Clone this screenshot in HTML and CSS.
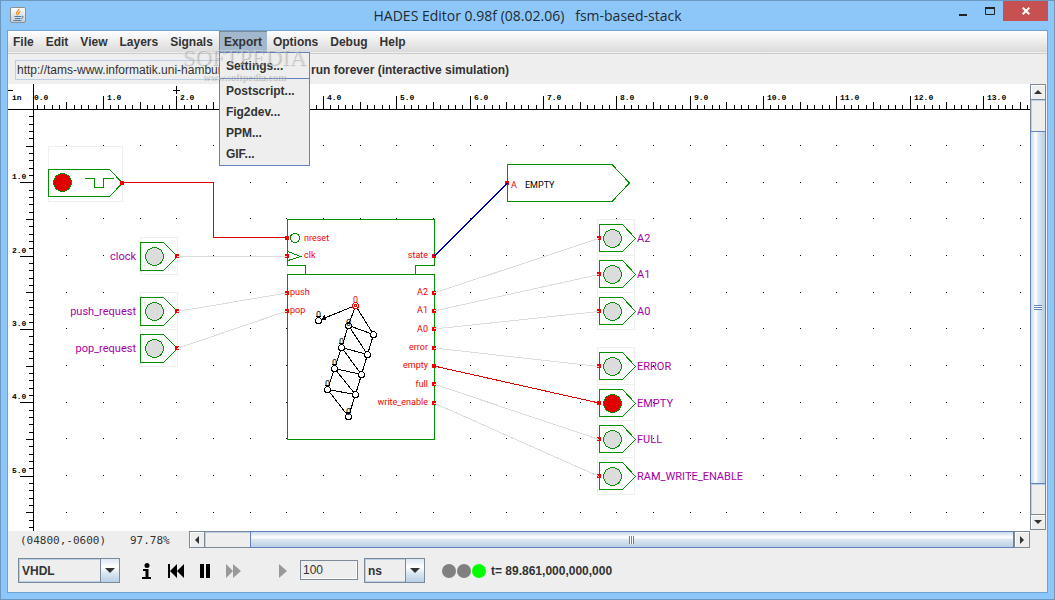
FILE: index.html
```html
<!DOCTYPE html>
<html lang="en">
<head>
<meta charset="utf-8">
<title>HADES Editor 0.98f (08.02.06) fsm-based-stack</title>
<link rel="stylesheet" href="styles.css">
</head>
<body>
<div class="window">
  <header class="titlebar">
    <svg class="app-icon" width="16" height="16" viewBox="0 0 16 16" aria-hidden="true">
      <defs><linearGradient id="tile" x1="0" y1="0" x2="0" y2="1"><stop offset="0" stop-color="#fff"/><stop offset="1" stop-color="#c4ccd2"/></linearGradient></defs>
      <rect x=".5" y=".5" width="15" height="15" rx="1.5" fill="url(#tile)" stroke="#8c8f90"/>
      <path d="M9 2C9 4 6 4.5 6.500 6.500C6.700 7.500 7.500 7.500 7.500 8.500M10.500 4.500C8.500 5.500 8 6 9 7.500" fill="none" stroke="#f08a1c" stroke-width="1.200"/>
      <path d="M4.500 9.500H11M5 11.500H10.500M3.500 13.500H11.500M11.500 9.500C14 8.500 13.500 11 11.300 11.500" fill="none" stroke="#4d7d9c"/>
    </svg>
    <h1 class="title">HADES Editor 0.98f (08.02.06) &nbsp; fsm-based-stack</h1>
    <div class="window-buttons">
      <button class="win-btn" aria-label="Minimize"><svg width="10" height="10"><path d="M1 8H9" stroke="#222" stroke-width="2"/></svg></button>
      <button class="win-btn" aria-label="Maximize"><svg width="10" height="8"><path d="M.5 1V7.500H9.500V1M0 1H10" fill="none" stroke="#222"/><path d="M0 1H10" stroke="#222" stroke-width="2"/></svg></button>
      <button class="win-btn close" aria-label="Close"><svg width="8" height="8"><path d="M.7 .7L7.300 7.300M7.300 .7L.7 7.300" stroke="#fff" stroke-width="2"/></svg></button>
    </div>
  </header>

  <div class="client">
    <nav class="menubar">
      <button class="menu">File</button>
      <button class="menu">Edit</button>
      <button class="menu">View</button>
      <button class="menu">Layers</button>
      <button class="menu">Signals</button>
      <div class="menu-holder">
        <button class="menu open" aria-expanded="true">Export</button>
        <div class="popup" role="menu">
          <button class="item first" role="menuitem">Settings...</button>
          <button class="item" role="menuitem">Postscript...</button>
          <button class="item" role="menuitem">Fig2dev...</button>
          <button class="item" role="menuitem">PPM...</button>
          <button class="item" role="menuitem">GIF...</button>
        </div>
        <div class="watermark"><span class="wm-name">SOFTPEDIA</span><span class="wm-site">www.softpedia.com</span></div>
      </div>
      <button class="menu">Options</button>
      <button class="menu">Debug</button>
      <button class="menu">Help</button>
    </nav>

    <div class="location">
      <input class="url" type="text" aria-label="Design location" value="http://tams-www.informatik.uni-hamburg.de">
      <span class="mode">run forever (interactive simulation)</span>
    </div>

    <div class="workspace">
      <svg class="canvas" role="img" aria-label="Schematic">
        <defs>
          <g id="in-pin">
            <rect class="bounds" x="-14" y="-19" width="37" height="37"/>
            <path class="shape" d="M-14 -14H9L23 0L9 14H-14Z"/>
            <circle class="lamp" r="9"/>
          </g>
          <g id="out-pin">
            <rect class="bounds" x="-15" y="-19" width="37" height="37"/>
            <path class="shape" d="M-13 -14H10L23 0L10 13H-13Z"/>
            <circle class="lamp" r="9"/>
          </g>
          <rect id="port" x="-2" y="-2" width="4" height="4" fill="#f00000"/>
          <circle id="state" class="node" r="3"/>
          <marker id="arrow" viewBox="0 0 6 6" refX="9" refY="3" markerWidth="5" markerHeight="5" orient="auto"><path d="M0 0L6 3L0 6Z"/></marker>
        </defs>
        <g transform="translate(-8 -84)">
          <g id="grid"></g>
          <g id="rulers" class="ruler">
            <path class="tick" d="M8 109.500H3000M33.500 84V3000M8 90.500H13M173 90.500H180M176.500 86V94"/>
            <text x="12" y="100">in</text>
          </g>

          <rect class="bounds" x="48.500" y="146.500" width="74" height="55"/>
          <path class="shape" d="M48.500 169.500H109.500L122.500 183L109.500 196.500H48.500Z"/>
          <path class="outline" d="M85 178.500H94.500V187.500H103.500V178.500H114"/>
          <circle class="lamp on" cx="62.500" cy="182.500" r="9"/>

          <use href="#in-pin" x="154.500" y="256.500"/>
          <use href="#in-pin" x="154.500" y="311.500"/>
          <use href="#in-pin" x="154.500" y="348.500"/>
          <use href="#out-pin" x="612.500" y="238.500"/>
          <use href="#out-pin" x="612.500" y="274.500"/>
          <use href="#out-pin" x="612.500" y="311.500"/>
          <use href="#out-pin" x="612.500" y="366.500"/>
          <use href="#out-pin" x="612.500" y="403.500"/>
          <use href="#out-pin" x="612.500" y="439.500"/>
          <use href="#out-pin" x="612.500" y="476.500"/>
          <circle class="lamp on" cx="612.500" cy="403.500" r="9"/>

          <path class="shape" d="M507.500 164.500H612L629.500 183L612 201.500H507.500Z"/>

          <rect class="bounds" x="287.500" y="219.500" width="147" height="220"/>
          <path class="shape" d="M305.500 274.500V265.500H287.500V219.500H434.500V265.500H415.500V274.500"/>
          <rect class="shape" x="287.500" y="274.500" width="147" height="165"/>
          <circle class="outline" cx="295" cy="238" r="4.700"/>
          <path class="outline" d="M288 251.500L300.500 256.500L288 260.500"/>

          <g>
            <use href="#port" x="122" y="183"/><use href="#port" x="177" y="256"/><use href="#port" x="177" y="311"/><use href="#port" x="177" y="348"/>
            <use href="#port" x="287" y="238"/><use href="#port" x="287" y="256"/><use href="#port" x="287" y="293"/><use href="#port" x="287" y="311"/>
            <use href="#port" x="434" y="256"/><use href="#port" x="434" y="293"/><use href="#port" x="434" y="311"/><use href="#port" x="434" y="329"/>
            <use href="#port" x="434" y="348"/><use href="#port" x="434" y="366"/><use href="#port" x="434" y="384"/><use href="#port" x="434" y="403"/>
            <use href="#port" x="507" y="183"/><use href="#port" x="599" y="238"/><use href="#port" x="599" y="274"/><use href="#port" x="599" y="311"/>
            <use href="#port" x="599" y="366"/><use href="#port" x="599" y="403"/><use href="#port" x="599" y="439"/><use href="#port" x="599" y="476"/>
          </g>

          <g class="wires">
            <path class="low" d="M177 256.500H287M177 311.500L287 293M177 348.500L287 311M434 293L599 238.500M434 311L599 274.500M434 329L599 311.500M434 348L599 366.500M434 384L599 439.500M434 403L599 476.500"/>
            <path class="high" d="M122 182.500H213.500V237.500H287M434 366L599 403"/>
            <path class="bus" d="M434.500 256L507.500 183"/>
          </g>

          <g class="fsm">
            <g class="edges">
              <path marker-end="url(#arrow)" d="M355.500 305.500L318.500 320.500"/>
              <path d="M355.500 305.500L348.500 325.500L341.500 347.500L334.500 368.500L327.500 389.500L348.500 416.500L355.500 394.500L361.500 374.500L367.500 354.500L373.500 334.500Z"/>
              <path d="M348.500 325.500L373.500 334.500M348.500 325.500L367.500 354.500L341.500 347.500L361.500 374.500L334.500 368.500L355.500 394.500L327.500 389.500"/>
            </g>
            <use href="#state" x="318.500" y="320.500"/>
            <use href="#state" x="348.500" y="325.500"/><use href="#state" x="341.500" y="347.500"/><use href="#state" x="334.500" y="368.500"/><use href="#state" x="327.500" y="389.500"/>
            <use href="#state" x="373.500" y="334.500"/><use href="#state" x="367.500" y="354.500"/><use href="#state" x="361.500" y="374.500"/><use href="#state" x="355.500" y="394.500"/>
            <use href="#state" x="348.500" y="416.500"/>
            <circle class="start" cx="355.500" cy="305.500" r="3"/><circle class="start" cx="355.500" cy="305.500" r="1"/>
            <g class="state-name">
              <text class="red" x="355.500" y="303">0</text><text x="318.500" y="318">0</text><text x="348.500" y="326">0</text><text x="341.500" y="345">0</text>
              <text x="334.500" y="366">0</text><text x="327.500" y="387">0</text><text x="348.500" y="415">0</text>
            </g>
            <path class="edges" d="M316 316.500H321M346 323.500H351M339 343.500H344M332 364.500H337M325 385.500H330M346 412.500H351"/>
          </g>

          <g class="pin-name">
            <text x="304" y="241">nreset</text><text x="304" y="258">clk</text><text x="290" y="295">push</text><text x="290" y="313">pop</text>
            <text x="511" y="188">A</text><text class="black" x="525" y="188">EMPTY</text>
            <g class="end">
              <text x="428" y="258">state</text><text x="428" y="295">A2</text><text x="428" y="313">A1</text><text x="428" y="332">A0</text>
              <text x="428" y="350">error</text><text x="428" y="368">empty</text><text x="428" y="387">full</text><text x="428" y="405">write_enable</text>
            </g>
          </g>
          <g class="net-name">
            <g class="end"><text x="136" y="260">clock</text><text x="136" y="315">push_request</text><text x="136" y="352">pop_request</text></g>
            <text x="637" y="242">A2</text><text x="637" y="278">A1</text><text x="637" y="315">A0</text><text x="637" y="370">ERROR</text>
            <text x="637" y="407">EMPTY</text><text x="637" y="443">FULL</text><text x="637" y="480">RAM_WRITE_ENABLE</text>
          </g>
        </g>
      </svg>
      <div class="scroll vertical">
        <button class="arrow" aria-label="Scroll up"><svg width="8" height="4"><path d="M0 4L4 0L8 4Z"/></svg></button>
        <div class="track before"></div>
        <div class="thumb"><span class="grip"></span></div>
        <div class="track after"></div>
        <button class="arrow" aria-label="Scroll down"><svg width="8" height="4"><path d="M0 0L4 4L8 0Z"/></svg></button>
      </div>
    </div>

    <div class="status">
      <span class="coords">(04800,-0600)</span>
      <span class="zoom">97.78%</span>
      <div class="scroll horizontal">
        <button class="arrow" aria-label="Scroll left"><svg width="4" height="8"><path d="M4 0L0 4L4 8Z"/></svg></button>
        <div class="track before"></div>
        <div class="thumb"><span class="grip"></span></div>
        <button class="arrow" aria-label="Scroll right"><svg width="4" height="8"><path d="M0 0L4 4L0 8Z"/></svg></button>
      </div>
    </div>

    <div class="controls">
      <div class="combo language"><select aria-label="Language"><option>VHDL</option></select></div>
      <div class="player">
        <button class="tool" aria-label="Information"><svg width="10" height="16"><circle cx="5" cy="2.500" r="2.500"/><path d="M1 6H6.500V14H9V16H0V14H3.500V8H1Z"/></svg></button>
        <button class="tool" aria-label="Rewind"><svg width="16" height="14"><path d="M0 0H2V14H0ZM9 0V14L2 7ZM16 0V14L9 7Z"/></svg></button>
        <button class="tool" aria-label="Pause"><svg width="10" height="14"><path d="M0 0H4V14H0ZM6 0H10V14H6Z"/></svg></button>
        <button class="tool off" aria-label="Run"><svg width="15" height="14"><path d="M0 0L7 7L0 14ZM7 0L15 7L7 14Z"/></svg></button>
      </div>
      <button class="tool off step" aria-label="Step"><svg width="8" height="14"><path d="M0 0L8 7L0 14Z"/></svg></button>
      <input class="amount" type="text" aria-label="Step time" value="100">
      <div class="combo unit"><select aria-label="Time unit"><option>ns</option></select></div>
      <svg class="lights" width="44" height="14" role="img" aria-label="Running"><circle cx="7" cy="7" r="7" fill="#808080"/><circle cx="22" cy="7" r="7" fill="#808080"/><circle cx="37" cy="7" r="7" fill="#0f0"/></svg>
      <span class="time">t= 89.861,000,000,000</span>
    </div>
  </div>
</div>
<script src="ruler.js"></script>
</body>
</html>
```
FILE: styles.css
```css
* { box-sizing: border-box; }
body { margin: 0; font: bold 12px/14px "Liberation Sans", Arial, sans-serif; color: #333; }
button, input, select { font: inherit; color: inherit; margin: 0; padding: 0; border: 0; border-radius: 0; background: none; }
svg { display: block; }

.window { display: flex; flex-direction: column; height: 100vh; padding: 0 6px 6px; background: #8dc7fa; border: 1px solid #6b97c0; }
.titlebar { display: flex; align-items: flex-start; height: 29px; flex: none; position: relative; }
.app-icon { margin: 6px 0 0 3px; }
.title { position: absolute; inset: 5px 0 auto; margin: 0; text-align: center; font: 14px/20px "Open Sans", "Noto Sans", sans-serif; color: #222b33; pointer-events: none; }
.window-buttons { display: flex; margin-left: auto; }
.win-btn { display: grid; justify-items: center; width: 27px; height: 20px; padding-top: 6px; align-content: start; }
.close { width: 45px; padding-top: 0; align-content: center; background: #c75050; }

.client { display: flex; flex-direction: column; flex: 1; min-height: 0; border: 1px solid #6fa3d4; background: #eee; }
.menubar { display: flex; flex: none; height: 23px; background: linear-gradient(#fff, #dadada 21px, #eee 21px, #eee 22px, #ccc 22px); }
.menu { display: block; height: 21px; padding: 0 6px; white-space: nowrap; }
.menu:first-child { padding-left: 5px; }
.menu-holder { position: relative; }
.open { padding-right: 5px; background: #a3b8cc; box-shadow: inset 1px 1px #7a8a99; }
.popup { position: absolute; z-index: 2; top: 21px; left: 0; width: 91px; padding-bottom: 1px; border: 1px solid #6382bf; background: #eee; }
.item { display: block; width: 100%; height: 21px; padding-left: 6px; text-align: left; }
.first { height: 26px; border-bottom: 1px solid #6382bf; margin-bottom: 1px; }
.watermark { position: absolute; z-index: 3; top: 14px; right: -39px; display: flex; flex-direction: column; align-items: center; pointer-events: none; color: rgba(255, 255, 255, .35); text-shadow: 1px 1px 1px rgba(90, 90, 90, .35); }
.wm-name { font: 23px/25px "Liberation Serif", serif; }
.wm-site { font: bold 10px/14px "Liberation Serif", serif; }

.location { display: flex; align-items: center; gap: 6px; flex: none; height: 30px; padding: 1px 0 0 7px; }
.url { width: 290px; height: 20px; padding-left: 1px; border: 1px solid #b8cfe5; background: #eee; font-weight: normal; }

.workspace { display: flex; flex: 1; min-height: 0; }
.canvas { flex: 1; min-width: 0; height: 100%; background: #fff; shape-rendering: crispEdges; }
.bounds { fill: #fff; stroke: #efefef; }
.shape { fill: #fff; stroke: #009000; }
.outline { fill: none; stroke: #009000; }
.lamp { fill: #dcdcdc; stroke: #009000; }
.on { fill: #e00000; }
.dot { fill: #000; }
.tick { stroke: #000; fill: none; }
.ruler { font: bold 8px "Liberation Mono", monospace; }
.wires { fill: none; }
.low { stroke: #dcdcdc; }
.high { stroke: #e00000; }
.bus { stroke: #0000c0; }
.edges { fill: none; stroke: #000; }
.node { fill: #fff; stroke: #000; }
.start { fill: #fff; stroke: #f00; }
.state-name { font: 9px Roboto, sans-serif; text-anchor: middle; }
.pin-name { font: 9px Roboto, sans-serif; fill: #f00000; }
.net-name { font: 11px Roboto, sans-serif; fill: #a800a8; }
.end { text-anchor: end; }
.red { fill: #f00; }
.black { fill: #000; }

.scroll { display: flex; background: #eee; }
.vertical { flex-direction: column; flex: none; width: 17px; padding: 0 1px 1px 0; }
.horizontal { flex: 1; height: 17px; margin-right: 17px; }
.arrow { display: grid; place-items: center; flex: none; width: 16px; height: 16px; border: 1px solid #7a8a99; box-shadow: inset 1px 1px #fff; fill: #333; }
.horizontal .arrow { height: 17px; }
.track { border: 1px solid #7a8a99; box-shadow: inset 1px 1px #b8cfe5; }
.vertical .track { border-width: 0 1px; }
.horizontal .track { border-width: 1px 0; }
.thumb { display: grid; place-items: center; border: 1px solid #6382bf; }
.vertical .thumb { flex: 353; background: linear-gradient(90deg, #c8d9ea, #fff 35%, #dde8f2 50%, #b8cfe5); }
.horizontal .thumb { flex: 763; background: linear-gradient(#c8d9ea, #fff 35%, #dde8f2 50%, #b8cfe5); }
.vertical .before { flex: 31; }
.vertical .after { flex: 30; }
.horizontal .before { flex: 45; }
.grip { background: repeating-linear-gradient(#6382bf 0 1px, #fff 1px 2px); width: 8px; height: 5px; }
.horizontal .grip { background: repeating-linear-gradient(90deg, #6382bf 0 1px, #fff 1px 2px); width: 5px; height: 8px; }

.status { display: flex; flex: none; align-items: flex-start; height: 18px; padding-left: 12px; font: 11px/20px "DejaVu Sans Mono", monospace; }
.coords { width: 110px; }
.zoom { width: 59px; }

.controls { display: flex; flex: none; align-items: center; height: 43px; padding-left: 10px; }
.combo { position: relative; height: 25px; border: 1px solid #7a8a99; box-shadow: inset 1px 1px #b8cfe5, inset -1px -1px #b8cfe5; }
.combo select { appearance: none; width: 100%; height: 100%; padding-left: 3px; }
.combo::before { content: ""; position: absolute; inset: 0 0 0 auto; width: 18px; border-left: 1px solid #7a8a99; background: linear-gradient(#dde8f2, #fff 35%, #dde8f2 60%, #b8cfe5); pointer-events: none; }
.combo::after { content: ""; position: absolute; right: 4px; top: 9px; width: 10px; height: 5px; background: #333; clip-path: polygon(0 0, 100% 0, 50% 100%); pointer-events: none; }
.language { width: 102px; }
.unit { width: 61px; margin-left: 6px; }
.player { display: flex; align-items: center; gap: 16px; margin-left: 22px; }
.tool { fill: #000; }
.off { fill: #999; }
.step { margin-left: 38px; }
.amount { width: 58px; height: 20px; margin: 0 0 2px 13px; padding-left: 2px; border: 1px solid #7a8a99; box-shadow: inset -1px -1px #fff; background: #eee; font-weight: normal; }
.lights { margin-left: 17px; }
.time { margin-left: 5px; white-space: nowrap; }
```
FILE: ruler.js
```javascript
// Draws the inch rulers and the half-inch dot grid over the visible canvas.
(function () {
  var NS = "http://www.w3.org/2000/svg";
  var INCH = 73.33, X0 = 29.7, Y0 = 109;
  var rulers = document.getElementById("rulers");
  var grid = document.getElementById("grid");
  var canvas = document.querySelector(".canvas").getBoundingClientRect();
  var right = canvas.right, bottom = canvas.bottom;

  function add(parent, name, attrs, text) {
    var el = document.createElementNS(NS, name);
    Object.keys(attrs).forEach(function (k) { el.setAttribute(k, attrs[k]); });
    if (text) el.textContent = text;
    parent.appendChild(el);
  }

  var d = "", i, x, y, len;
  for (i = 0; (x = Math.round(X0 + i * INCH / 10)) < right; i++) {
    if (i === 0) { add(rulers, "text", { x: 34, y: 100 }, "0.0"); continue; }
    len = i % 10 === 0 ? 13 : i % 5 === 0 ? 7 : 4;
    d += "M" + (x + 0.5) + " 109V" + (109 - len);
    if (i % 10 === 0) add(rulers, "text", { x: x + 4, y: 100 }, i / 10 + ".0");
  }
  for (i = 1; (y = Math.round(Y0 + i * INCH / 10)) < bottom; i++) {
    len = i % 10 === 0 ? 13 : i % 5 === 0 ? 7 : 4;
    d += "M33 " + (y + 0.5) + "H" + (33 - len);
    if (i % 10 === 0) add(rulers, "text", { x: 12, y: y - 3 }, i / 10 + ".0");
  }
  add(rulers, "path", { "class": "tick", d: d });

  for (y = Y0 + INCH / 2; y < bottom; y += INCH / 2) {
    for (x = X0 + INCH / 2; x < right; x += INCH / 2) {
      add(grid, "rect", { "class": "dot", x: Math.round(x), y: Math.floor(y), width: 1, height: 1 });
    }
  }
})();
```
